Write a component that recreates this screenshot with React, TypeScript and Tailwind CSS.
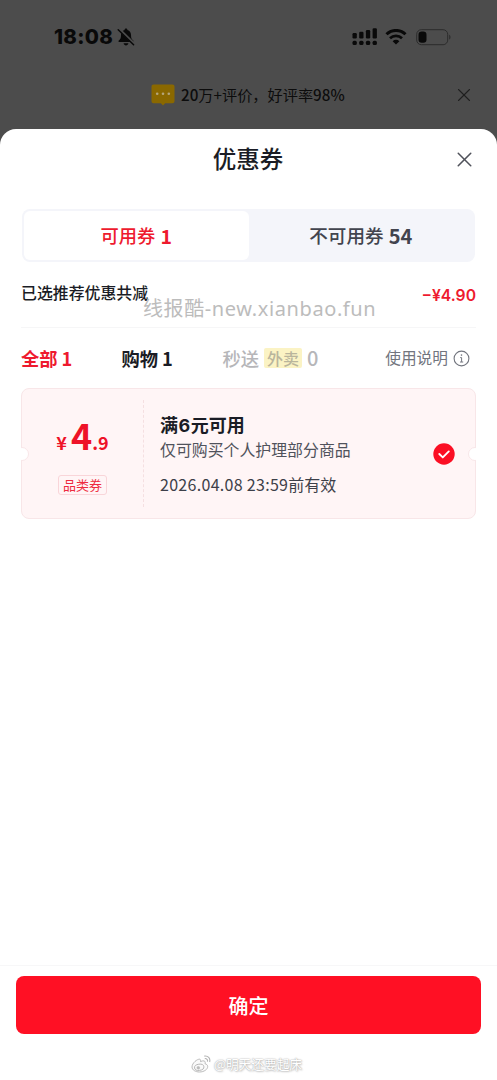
import { X } from "lucide-react";

const filters = [
  { label: "全部", count: 1, className: "w-[100.5px] text-[#ee1a2e]" },
  { label: "购物", count: 1, className: "w-[101px] text-[#1a1c25]" },
];

function BellOffIcon() {
  return (
    <svg width="18" height="18" viewBox="0 0 18 18" fill="none">
      <path
        d="M9 0.6c-.9 0-1.4.6-1.4 1.3C5 2.600 4 4.600 4 7c0 3-.6 4.300-2.200 5.600-.7.600-.4 1.500.5 1.500h13.400c.9 0 1.200-.9.5-1.500C14.600 11.300 14 10 14 7c0-2.400-1-4.400-3.600-5.100C10.400 1.200 9.900.6 9 .6Z"
        fill="#090909"
      />
      <path d="M6.600 15.300h4.800c-.3 1.300-1.200 2.100-2.400 2.100s-2.100-.8-2.400-2.100Z" fill="#090909" />
      <path d="M2.200 1.200 17 15.600" stroke="#4c4c4c" strokeWidth="2.600" />
      <path d="M1.200 1.800 16.600 16.800" stroke="#090909" strokeWidth="1.500" strokeLinecap="round" />
    </svg>
  );
}

function SignalIcon() {
  return (
    <svg width="26" height="18" viewBox="0 0 26 18" fill="#090909">
      <rect x="0.500" y="5" width="4.300" height="5.500" rx="1.200" />
      <rect x="7.200" y="3.800" width="4.300" height="6.700" rx="1.200" />
      <rect x="13.900" y="2.100" width="4.300" height="8.400" rx="1.200" />
      <rect x="20.600" y="0.200" width="4.300" height="10.300" rx="1.200" />
      <rect x="0.500" y="12.700" width="4.300" height="4.400" rx="1.500" />
      <rect x="7.200" y="12.700" width="4.300" height="4.400" rx="1.500" />
      <rect x="13.900" y="12.700" width="4.300" height="4.400" rx="1.500" />
      <rect x="20.600" y="12.700" width="4.300" height="4.400" rx="1.500" />
    </svg>
  );
}

function WifiIcon() {
  return (
    <svg width="22" height="16" viewBox="0 0 22 16" fill="none">
      <path d="M1.500 5.300a13.600 13.600 0 0 1 19 0" stroke="#090909" strokeWidth="3" />
      <path d="M5 9.200a8.700 8.700 0 0 1 12 0" stroke="#090909" strokeWidth="2.700" />
      <path d="M11 15.500 7.600 12.200a4.900 4.900 0 0 1 6.800 0L11 15.500Z" fill="#090909" />
    </svg>
  );
}

function BatteryIcon() {
  return (
    <svg width="36" height="17" viewBox="0 0 36 17" fill="none">
      <rect x="0.700" y="0.700" width="31" height="15" rx="4.600" stroke="#2c2c2c" />
      <rect x="2.500" y="2.600" width="8" height="11.200" rx="3.200" fill="#090909" />
      <path d="M33.200 5.800c1.700.6 1.700 4.200 0 4.800V5.800Z" fill="#2c2c2c" />
    </svg>
  );
}

function CommentIcon() {
  return (
    <svg width="24" height="22" viewBox="0 0 24 22">
      <path
        d="M2.500.5h19c1.200 0 2 .8 2 2v14.700c0 1.200-.8 2-2 2h-7.300L12 21.500l-2.200-2.300H2.500c-1.200 0-2-.8-2-2V2.500c0-1.200.8-2 2-2Z"
        fill="#8a6800"
      />
      <circle cx="6.200" cy="9.800" r="1.300" fill="#b5a67a" />
      <circle cx="12" cy="9.800" r="1.300" fill="#b5a67a" />
      <circle cx="17.800" cy="9.800" r="1.300" fill="#b5a67a" />
    </svg>
  );
}

function InfoIcon() {
  return (
    <svg width="17" height="17" viewBox="0 0 17 17" fill="none" stroke="#72757e">
      <circle cx="8.500" cy="8.500" r="7.400" strokeWidth="1.100" />
      <circle cx="8.500" cy="5.100" r="0.800" fill="#72757e" stroke="none" />
      <path d="M7.200 7.600h1.400v4.300M7 12h3.200" />
    </svg>
  );
}

function WeiboIcon() {
  return (
    <svg width="20" height="18" viewBox="0 0 20 18" fill="none" stroke="#b3b3b3">
      <path
        d="M8.700 4.200C6.400 3.800 1 8 1 12c0 3 3.600 5 7.400 5 4.800 0 8.300-2.700 8.300-5.400 0-1.800-1.400-2.500-2.700-2.900.5-1.400.2-2.500-1-2.800-1-.2-2.300.1-3.500.7.200-1 .2-2.100-.8-2.400Z"
        strokeWidth="0.900"
        fill="#fafafa"
      />
      <ellipse cx="8.200" cy="12.300" rx="4.700" ry="3.100" transform="rotate(-8 8.200 12.300)" strokeWidth="0.900" />
      <circle cx="7.300" cy="12.800" r="1.400" fill="#bbb" strokeWidth="0.500" />
      <path d="M13.300 1.100c3.600-.7 6.400 2.400 5.300 5.900M13.800 3.600c1.800-.3 3.200 1.200 2.600 3" strokeWidth="1.100" />
    </svg>
  );
}

function Backdrop() {
  return (
    <div className="h-[145px] shrink-0 bg-[#4c4c4c]">
      <div className="flex h-[74px] items-center pl-[54px] pr-[45px]">
        <span className="w-[59px] font-['Inter'] text-[20.500px] font-extrabold leading-none tracking-[0.3px] text-[#090909]">
          18:08
        </span>
        <span className="ml-1 w-[18px]">
          <BellOffIcon />
        </span>
        <div className="ml-auto flex items-center">
          <SignalIcon />
          <span className="ml-[7px]">
            <WifiIcon />
          </span>
          <span className="ml-[9px]">
            <BatteryIcon />
          </span>
        </div>
      </div>
      <div className="flex h-[42px] items-center pl-[151px] pr-[22px]">
        <CommentIcon />
        <span className="ml-[6px] whitespace-nowrap text-[15.200px] leading-none text-[#0c0c0c]">
          <span className="font-medium">20</span>万+评价，好评率<span className="font-medium">98%</span>
        </span>
        <X className="ml-auto text-[#202020]" size={22} strokeWidth={1.200} />
      </div>
    </div>
  );
}

function Coupon() {
  return (
    <div className="relative mx-[21px] flex h-[131px] rounded-lg border border-[#f8e6e8] bg-[#fff5f6]">
      <span className="absolute -left-[7px] top-[58px] h-[14px] w-[14px] rounded-full border border-[#f8e6e8] bg-white [clip-path:inset(0_0_0_6px)]" />
      <span className="absolute -right-[7px] top-[58px] h-[14px] w-[14px] rounded-full border border-[#f8e6e8] bg-white [clip-path:inset(0_6px_0_0)]" />

      {/* Amount */}
      <div className="my-[11px] flex w-[122px] flex-col items-center border-r border-dashed border-[#f5dfe1] pt-[15px]">
        <div className="flex h-[38px] items-baseline font-bold leading-[38px] text-[#ee1228]">
          <span className="mr-[4px] text-[18px]">¥</span>
          <span className="text-[36px]">4</span>
          <span className="text-[18px]">.9</span>
        </div>
        <span className="mt-[22px] flex h-5 w-[49px] items-center justify-center rounded-[3px] border border-[#f9d5d9] pb-px text-[13px] leading-none text-[#ee2b40]">
          品类券
        </span>
      </div>

      {/* Details */}
      <div className="flex-1 whitespace-nowrap pl-4">
        <p className="mt-[23px] h-6 text-[18px] font-bold leading-6 text-[#1a1c25]">
          满<span className="mx-[0.500px] font-['Inter']">6</span>元可用
        </p>
        <p className="mt-[2px] h-6 text-[15.900px] leading-6 text-[#50525b]">仅可购买个人护理部分商品</p>
        <p className="mt-[10px] h-6 text-[16px] leading-6 text-[#3d3f49]">
          <span className="tracking-[0.300px]">2026.04.08 23:59</span>前有效
        </p>
      </div>
      <svg className="mr-[20px] mt-[54px]" width="22" height="22" viewBox="0 0 22 22" fill="none">
        <circle cx="11" cy="11" r="10.700" fill="#fb0f24" />
        <path d="m6.300 11 3.500 3.400 6-6" stroke="#fff" strokeWidth="1.900" strokeLinecap="round" strokeLinejoin="round" />
      </svg>
    </div>
  );
}

export default function App() {
  return (
    <div className="flex h-[1080px] w-[497px] flex-col overflow-hidden bg-white font-['Noto_Sans_CJK_SC',sans-serif]">
      <Backdrop />

      <section className="relative -mt-4 flex flex-1 flex-col rounded-t-[16px] bg-white">
        {/* Header */}
        <div className="flex h-[60px] items-center justify-end pr-[20px]">
          <h1 className="flex-1 pl-[44px] text-center text-[23.500px] font-medium leading-none text-[#1a1c25]">优惠券</h1>
          <X className="text-[#50525b]" size={25} strokeWidth={1.450} />
        </div>

        {/* Availability tabs */}
        <div className="mx-[22px] mt-[20px] flex h-[53px] rounded-lg bg-[#f4f5fa] p-[2px] text-[18.300px] leading-none">
          <button className="flex flex-1 items-center justify-center gap-[5px] rounded-md bg-white font-medium text-[#ee1a2e]">
            可用券 <b className="text-[19.500px]">1</b>
          </button>
          <button className="flex flex-1 items-center justify-center gap-[5px] font-medium text-[#42444e]">
            <span className="text-[18.600px]">不可用券</span> <b className="text-[20px]">54</b>
          </button>
        </div>

        <div className="relative mx-[21px] flex h-[66px] items-start justify-between border-b border-[#f6f6f7]">
          <span className="mt-[19px] text-[15.900px] font-medium leading-6 text-[#1a1c25]">已选推荐优惠共减</span>
          <span className="mt-[22px] font-['Inter'] text-[15.700px] font-semibold leading-6 text-[#ee1a2e]">−¥4.90</span>
          <span className="absolute left-[122px] top-[33px] whitespace-nowrap font-['Noto_Sans','Noto_Sans_CJK_SC',sans-serif] text-[20px] leading-7 tracking-[0.600px] text-[#bcbcbc]">
            线报酷-new.xianbao.fun
          </span>
        </div>

        {/* Category filters */}
        <div className="ml-[21px] mr-[22px] flex h-[60px] items-center whitespace-nowrap text-[18.300px] leading-none">
          {filters.map((filter) => (
            <div key={filter.label} className={`flex gap-[4px] font-bold ${filter.className}`}>
              {filter.label} <span>{filter.count}</span>
            </div>
          ))}
          <div className="flex items-center font-medium text-[#b6b6b9]">
            秒送
            <span className="ml-[5px] flex h-[20px] w-[38px] items-center justify-center rounded-[2px] bg-[#fbf3c4] pb-px text-[16px] text-[#b9b59c]">
              外卖
            </span>
            <span className="ml-[5px] text-[20px]">0</span>
          </div>
          <div className="ml-auto mr-[5px] flex items-center gap-[5px] text-[15.700px] text-[#72757e]">
            使用说明
            <InfoIcon />
          </div>
        </div>

        <Coupon />

        {/* Footer */}
        <footer className="mt-auto h-[115px] border-t border-[#f7f7f8] px-4 pt-[10px]">
          <button className="flex h-[58px] w-full items-center justify-center rounded-lg bg-[#ff1024] pt-[2px] text-[20px] font-medium leading-none text-white">
            确定
          </button>
          <div className="mt-[20px] flex h-5 items-center justify-center gap-[3px] pr-[4px]">
            <WeiboIcon />
            <span className="text-[12.700px] leading-none text-white [text-shadow:0_0_1px_#aaa,0_0_2px_#bbb,1px_1px_2px_#ccc]">
              @明天还要起床
            </span>
          </div>
        </footer>
      </section>
    </div>
  );
}
